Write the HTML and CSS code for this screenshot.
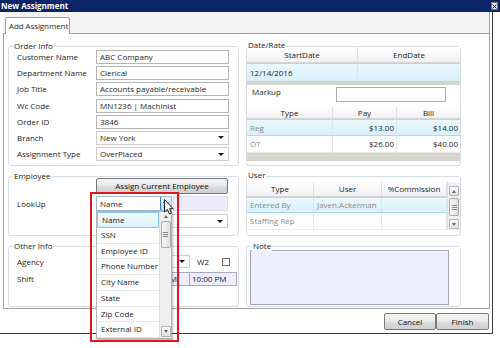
FILE: index.html
```html
<!DOCTYPE html>
<html>
<head>
<meta charset="utf-8">
<title>New Assignment</title>
<link rel="stylesheet" href="styles.css">
</head>
<body>
<div class="titlebar">
  <span class="ttext">New Assignment</span>
  <span class="close"><svg width="5" height="5" viewBox="0 0 5 5"><path d="M0.5 0.5L4.5 4.5M4.5 0.5L0.5 4.5" stroke="#222" stroke-width="1"/></svg></span>
</div>
<div class="window">
  <div class="tabs"><div class="tab">Add Assignment</div></div>
  <div class="panel">
    <div class="group">
      <div class="gtitle">Order Info</div>
      <div class="form">
        <span class="lbl">Customer Name</span><div class="field">ABC Company</div>
        <span class="lbl">Department Name</span><div class="field">Clerical</div>
        <span class="lbl">Job Title</span><div class="field">Accounts payable/receivable</div>
        <span class="lbl">Wc Code</span><div class="field">MN1236 | Machinist</div>
        <span class="lbl">Order ID</span><div class="field">3846</div>
        <span class="lbl">Branch</span><div class="field select soft">New York<span class="arrow"></span></div>
        <span class="lbl">Assignment Type</span><div class="field select soft">OverPlaced<span class="arrow"></span></div>
      </div>
    </div>

    <div class="group dr">
      <div class="gtitle flush">Date/Rate</div>
      <div class="grid g1">
        <div class="hd">StartDate</div><div class="hd last">EndDate</div>
        <div class="sel">12/14/2016</div><div class="sel last"></div>
        <div class="strip s3"></div>
      </div>
      <div class="markup"><span class="mlbl">Markup</span><div class="minput"></div></div>
      <div class="grid g2">
        <div class="hd h12">Type</div><div class="hd h12">Pay</div><div class="hd h12 last">Bill</div>
        <div class="sel r17 dim">Reg</div><div class="sel r17 num">$13.00</div><div class="sel r17 num last">$14.00</div>
        <div class="row r17 dim">OT</div><div class="row r17 num">$26.00</div><div class="row r17 num last">$40.00</div>
        <div class="strip s8"></div>
      </div>
    </div>

    <div class="group">
      <div class="gtitle tight">Employee</div>
      <div class="emp">
        <button class="btn assign">Assign Current Employee</button>
        <span class="lbl lk">LookUp</span>
        <div class="lkrow">
          <div class="combo">Name<span class="dbtn"><span class="arrow"></span></span></div>
          <div class="lav"></div>
        </div>
        <div class="field select soft esel"><span class="arrow"></span></div>
      </div>
    </div>

    <div class="group">
      <div class="gtitle flush ut">User</div>
      <div class="ugrid">
        <div class="hd">Type</div><div class="hd">User</div><div class="hd">%Commission</div>
        <div class="vscroll">
          <span class="sbtn"><span class="uarrow"></span></span>
          <span class="thumb"><svg width="5" height="5" viewBox="0 0 5 5"><path d="M0 0.5H5M0 2.5H5M0 4.5H5" stroke="#888" stroke-width="1"/></svg></span>
          <span class="sbtn bottom"><span class="arrow small"></span></span>
        </div>
        <div class="sel dim">Entered By</div><div class="sel dim">Javen.Ackerman</div><div class="sel"></div>
        <div class="row r17 dim">Staffing Rep</div><div class="row r17"></div><div class="row r17"></div>
      </div>
    </div>

    <div class="group">
      <div class="gtitle">Other Info</div>
      <div class="ogrid">
        <span class="lbl">Agency</span>
        <div class="orow">
          <div class="field select soft agsel"><span class="arrow"></span></div>
          <span class="w2">W2</span>
          <span class="chk"></span>
        </div>
        <span class="lbl">Shift</span>
        <div class="orow">
          <div class="time start">8:00 AM</div>
          <div class="time end">10:00 PM</div>
        </div>
      </div>
    </div>

    <div class="group">
      <div class="gtitle note">Note</div>
      <div class="notearea"></div>
    </div>
  </div>
  <div class="footer">
    <button class="btn fbtn">Cancel</button>
    <button class="btn fbtn finish">Finish</button>
  </div>
</div>

<div class="ddframe"></div>
<div class="ddlist">
  <div class="items">
    <div class="item hi">Name</div>
    <div class="item">SSN</div>
    <div class="item">Employee ID</div>
    <div class="item">Phone Number</div>
    <div class="item">City Name</div>
    <div class="item">State</div>
    <div class="item">Zip Code</div>
    <div class="item">External ID</div>
  </div>
  <div class="lscroll">
    <span class="lup"><span class="uarrow"></span></span>
    <span class="thumb lthumb"><svg width="5" height="5" viewBox="0 0 5 5"><path d="M0 0.5H5M0 2.5H5M0 4.5H5" stroke="#888" stroke-width="1"/></svg></span>
    <span class="sbtn bottom ldown"><span class="arrow small"></span></span>
  </div>
</div>
<svg class="cursor" width="11" height="17" viewBox="0 0 11 17"><path d="M0.5 0.5 L0.5 13 L3.4 10.4 L5.4 15 L7.4 14.1 L5.5 9.7 L9.2 9.7 Z" fill="#fff" stroke="#222" stroke-width="1" stroke-linejoin="round"/></svg>
</body>
</html>
```

FILE: styles.css
```css
* { box-sizing: border-box; }

body {
  margin: 0;
  width: 500px;
  height: 348px;
  overflow: hidden;
  position: relative;
  background: #fff;
  font-family: "Open Sans", "Noto Sans", sans-serif;
  font-size: 8px;
  color: #1e1e1e;
}

.titlebar {
  height: 12px;
  background: #0c2468;
  color: #fff;
  font-weight: 700;
  line-height: 12px;
  padding-left: 1px;
  display: flex;
  align-items: center;
  justify-content: space-between;
}

.close {
  width: 7px;
  height: 8px;
  margin-right: 2px;
  background: #e4e4e4;
  border: 1px solid #7a7a7a;
  display: flex;
  align-items: center;
  justify-content: center;
}

.window {
  width: 493px;
  height: 322px;
  border-right: 1px solid #3a3a3a;
  border-bottom: 1px solid #3a3a3a;
  padding-left: 3px;
  background: #fff;
}

.tabs {
  height: 21px;
  width: 487px;
  background: #f4f4f4;
  border-right: 1px solid #a0a0a0;
  padding: 5px 0 0 2px;
  display: flex;
}

.tab {
  position: relative;
  z-index: 1;
  height: 17px;
  width: 65px;
  background: #fff;
  border: 1px solid #a0a0a0;
  border-bottom: none;
  border-radius: 2px 2px 0 0;
  padding-left: 3px;
  line-height: 16px;
  white-space: nowrap;
  letter-spacing: -0.1px;
}

.panel {
  width: 487px;
  height: 276px;
  border: 1px solid #a0a0a0;
  padding: 12px 0 0 4px;
  display: grid;
  grid-template-columns: 231px 215px;
  grid-template-rows: 120px 60px 61px;
  column-gap: 7px;
  row-gap: 10px;
}

.group {
  border: 1px solid #d4dde4;
  border-radius: 3px;
  min-width: 0;
}

.gtitle {
  position: relative;
  z-index: 1;
  margin: -6px 0 0 4px;
  padding: 0 1px;
  width: fit-content;
  height: 10px;
  line-height: 10px;
  background: #fff;
  color: #222;
  white-space: nowrap;
}
.gtitle.flush {
  margin: -7px 0 -3px 0;
  background: linear-gradient(#fff 70%, transparent 70%);
}
.gtitle.ut { margin-bottom: 2px; background: #fff; }
.gtitle.tight { margin-bottom: -3px; }
.gtitle.note { margin-left: 5px; }

.lbl { line-height: 14px; color: #222; white-space: nowrap; }

.form {
  display: grid;
  grid-template-columns: 79px 133px;
  grid-auto-rows: 14px;
  row-gap: 2.2px;
  margin: -1px 0 0 8px;
}

.field {
  height: 14px;
  border: 1px solid #b4b4b4;
  padding-left: 3px;
  line-height: 12px;
  background: #fff;
  white-space: nowrap;
  overflow: hidden;
}
.field.soft { border-color: #cdcdcd; }
.select { display: flex; align-items: center; }

.arrow {
  width: 0;
  height: 0;
  border-left: 3px solid transparent;
  border-right: 3px solid transparent;
  border-top: 3px solid #1a1a1a;
  margin-left: auto;
  margin-right: 4px;
}
.arrow.small { border-left-width: 2.5px; border-right-width: 2.5px; border-top: 3px solid #666; margin: 0; }
.uarrow {
  width: 0;
  height: 0;
  border-left: 2.5px solid transparent;
  border-right: 2.5px solid transparent;
  border-bottom: 3px solid #666;
}

/* grids */
.grid { display: grid; }
.g1 { grid-template-columns: 111px 102px; }
.g2 { grid-template-columns: 86px 64px 63px; }

.hd {
  height: 16px;
  line-height: 15px;
  text-align: center;
  background: linear-gradient(#ffffff, #f1f1f1);
  border-bottom: 1px solid #d6d6d6;
  border-right: 1px solid #dedede;
  color: #222;
  white-space: nowrap;
}
.hd.h12 { height: 12px; line-height: 11px; }
.hd.last, .sel.last, .row.last { border-right: none; }

.sel {
  height: 19px;
  line-height: 17px;
  padding: 0 3px;
  background: linear-gradient(#ecf8fd, #d7f0fb);
  border-top: 1px solid #a8daf0;
  border-bottom: 1px solid #a8daf0;
  border-right: 1px solid #d2e8f2;
  white-space: nowrap;
  overflow: hidden;
}
.row {
  height: 17px;
  line-height: 16px;
  padding: 0 3px;
  border-bottom: 1px solid #ececec;
  border-right: 1px solid #e6e6e6;
  white-space: nowrap;
}
.sel.r17 { height: 17px; line-height: 15px; }
.dim { color: #8a8a8a; }
.num { text-align: right; padding-right: 2px; }

.strip { grid-column: 1 / -1; background: #d5d5cd; }
.s3 { height: 3px; }
.s8 { height: 8px; }

.markup {
  height: 22px;
  display: flex;
  align-items: flex-start;
  padding-left: 5px;
}
.mlbl { line-height: 12px; margin-top: 1px; }
.minput {
  margin: 2px 14px 0 auto;
  width: 110px;
  height: 15px;
  border: 1px solid #ababab;
  background: #fff;
}

/* employee */
.emp {
  display: grid;
  grid-template-columns: 79px 132px;
  margin-left: 8px;
}
.btn {
  font: inherit;
  color: #111;
  padding: 0;
  border: 1px solid #7a7a7a;
  border-radius: 2px;
  background: linear-gradient(#f4f4f4, #e9e9e9 50%, #dcdcdc 51%, #cfcfcf);
  white-space: nowrap;
}
.assign { grid-column: 2; height: 16px; line-height: 14px; }
.lk { margin-top: 2px; line-height: 15px; }
.lkrow { display: flex; margin-top: 2px; height: 15px; }
.combo {
  width: 76px;
  height: 15px;
  border: 1px solid #9fb7cf;
  background: #fff;
  padding-left: 3px;
  line-height: 13px;
  display: flex;
}
.dbtn {
  margin-left: auto;
  width: 11px;
  height: 13px;
  background: linear-gradient(#e6f3fd, #b9dbf6);
  border-left: 1px solid #3c7fb1;
  display: flex;
  align-items: center;
  justify-content: center;
}
.dbtn .arrow { margin: 0; }
.lav {
  width: 55px;
  height: 15px;
  margin-left: 1px;
  background: #ececfb;
  border: 1px solid #dcdcec;
}
.esel { grid-column: 2; margin-top: 3px; }

/* user grid */
.ugrid {
  display: grid;
  grid-template-columns: 67px 68px 65px 13px;
  grid-template-rows: 15px 16px 17px;
}
.ugrid .hd { height: 15px; line-height: 14px; }
.ugrid .sel { height: 16px; line-height: 14px; }
.vscroll {
  grid-column: 4;
  grid-row: 1 / 4;
  background: #f0f0f0;
  border-left: 1px solid #dddddd;
  display: flex;
  flex-direction: column;
  align-items: center;
  padding: 4px 0 0;
}
.sbtn {
  width: 10px;
  height: 10px;
  border: 1px solid #b4b4b4;
  border-radius: 1px;
  background: linear-gradient(#fdfdfd, #e2e2e2);
  display: flex;
  align-items: center;
  justify-content: center;
}
.sbtn.bottom { margin-top: auto; margin-bottom: 1px; }
.thumb {
  margin-top: 2px;
  width: 10px;
  height: 18px;
  border: 1px solid #a9a9a9;
  border-radius: 2px;
  background: linear-gradient(90deg, #f7f7f7, #dedede);
  display: flex;
  align-items: center;
  justify-content: center;
}

/* other info */
.ogrid {
  display: grid;
  grid-template-columns: 79px 141px;
  grid-template-rows: 13px 14px;
  row-gap: 4px;
  margin: 4px 0 0 8px;
}
.ogrid .lbl { line-height: 13px; }
.orow { display: flex; align-items: center; }
.agsel { width: 94px; height: 13px; }
.w2 { margin-left: 7px; width: 25px; }
.chk {
  width: 8px;
  height: 8px;
  border: 1px solid #6d6d6d;
  background: #fff;
}
.time {
  height: 14px;
  line-height: 12px;
  background: #ededfb;
  border: 1px solid #a9a9c6;
  white-space: nowrap;
}
.time.start { width: 94px; text-align: right; padding-right: 12px; }
.time.end { width: 47px; padding-left: 2px; border-left: none; }

/* note */
.notearea {
  margin: -1px 0 0 3px;
  width: 199px;
  height: 55px;
  background: #ededfc;
  border: 1px solid #a3a3c2;
}

/* footer */
.footer {
  display: flex;
  justify-content: flex-end;
  padding: 4px 3px 0 0;
}
.fbtn { height: 17px; width: 52px; line-height: 15px; }
.fbtn.finish { width: 53px; margin-left: 0; }

/* dropdown overlay */
.ddframe {
  position: absolute;
  left: 90px;
  top: 192px;
  width: 89px;
  height: 150px;
  border: 2px solid #e3141c;
  z-index: 3;
}
.ddlist {
  position: absolute;
  left: 96px;
  top: 211px;
  width: 76px;
  height: 128px;
  background: #fff;
  border: 1px solid #b5b5b5;
  box-shadow: 1px 2px 2px rgba(0, 0, 0, 0.28);
  display: flex;
  z-index: 2;
}
.items { width: 63px; }
.item {
  height: 15.75px;
  line-height: 14px;
  padding-left: 4px;
  border-bottom: 1px solid #e6e6e6;
  color: #222;
  white-space: nowrap;
}
.item.hi {
  background: linear-gradient(#f0f9fe, #dcf1fc);
  border: 1px solid #8ac6ea;
}
.lscroll {
  width: 12px;
  background: #efefef;
  border-left: 1px solid #e0e0e0;
  display: flex;
  flex-direction: column;
  align-items: center;
}
.lup {
  height: 9px;
  display: flex;
  align-items: center;
  justify-content: center;
}
.lthumb { margin-top: 0; height: 27px; }
.ldown { height: 11px; }

.cursor {
  position: absolute;
  left: 164px;
  top: 199px;
  z-index: 4;
}
```
